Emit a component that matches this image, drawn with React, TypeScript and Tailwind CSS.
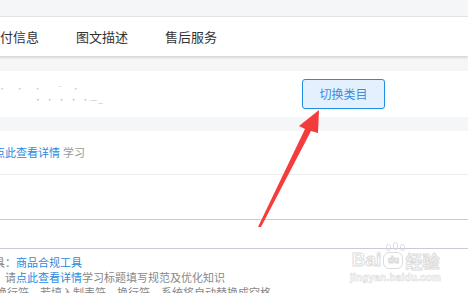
const cjk = "font-['Noto_Sans_CJK_SC','Noto_Sans',sans-serif]"

const tabs = ["支付信息", "图文描述", "售后服务"]

function Arrow() {
  return (
    <svg className="absolute left-0 top-0 pointer-events-none" width={468} height={293} viewBox="0 0 468 293">
      <polygon
        points="258,227 305,129 299,126 319,110 318,133 311,131 261,227"
        fill="#f53c3c"
      />
    </svg>
  )
}

function Watermark() {
  return (
    <div className="absolute left-[350px] top-[250px] flex flex-col items-center select-none">
      <div className="flex items-end gap-[2px] text-transparent [-webkit-text-stroke:1px_#dcdcdc]">
        <span className="font-['Liberation_Sans',sans-serif] text-[19px] font-bold leading-none">Bai</span>
        <span className="relative w-[20px] h-[17px] rounded-[6px] border border-[#dcdcdc] flex items-center justify-center text-[9px] font-bold font-['Liberation_Sans',sans-serif] leading-none">
          du
          <span className="absolute -top-[9px] left-[2px] flex gap-[2px]">
            <span className="w-[5px] h-[7px] rounded-full border border-[#dcdcdc]" />
            <span className="w-[5px] h-[8px] rounded-full border border-[#dcdcdc] -mt-[2px]" />
            <span className="w-[5px] h-[7px] rounded-full border border-[#dcdcdc]" />
          </span>
        </span>
        <span className={`${cjk} text-[17px] font-bold leading-none`}>经验</span>
      </div>
      <div className="mt-[4px] text-[10px] leading-none font-['Liberation_Sans',sans-serif] font-bold text-transparent [-webkit-text-stroke:0.6px_#dcdcdc] tracking-[0.2px]">
        jingyan.baidu.com
      </div>
    </div>
  )
}

export default function App() {
  return (
    <div className={`relative w-[468px] h-[293px] overflow-hidden bg-[#f5f6f8] ${cjk}`}>
      <div className="h-[16px]" />
      {/* tab bar */}
      <div className="h-[40px] bg-white border-t border-[#e3e4e8] shadow-[0_2px_2px_rgba(0,0,0,0.12)] flex items-center gap-[37px] -ml-[13px] text-[13px] text-[#333]">
        {tabs.map((t) => (
          <span key={t} className="leading-none">{t}</span>
        ))}
      </div>
      <div className="h-[15px]" />
      {/* category card */}
      <div className="h-[46px] bg-white flex items-center">
        <div className="w-[304px] flex flex-col gap-[3px] -ml-[2px] text-[#c8c8c8] leading-none">
          <span className="text-[8px] tracking-[4px]">· · ·&nbsp; ¯ ·</span>
          <span className="text-[8px] pl-[36px] text-[#bbb] tracking-[1px]">· · ·&nbsp;· ·—_</span>
        </div>
        <button className="w-[83px] h-[30px] rounded-[3px] border border-[#1e8fe1] bg-[#e4f0fd] text-[12px] text-[#3b8de0] leading-none">
          切换类目
        </button>
      </div>
      <div className="h-[14px]" />
      {/* form section */}
      <div className="bg-white h-full">
        <div className="h-[44px] border-b border-[#ececec] flex items-center -ml-[6px] text-[11px] leading-none">
          <span className="text-[#2b8ae0]">点此查看详情</span>
          <span className="ml-[3px] text-[#999]">学习</span>
        </div>
        <div className="h-[45px] border-b border-[#cbc8d8]" />
        <div className="h-[29px] border-b border-[#cbc8d8]" />
        <div className="pt-[8px] flex flex-col gap-[4px] text-[11px] leading-[11px] text-[#888]">
          <div className="-ml-[6px]">
            具：<span className="text-[#2b8ae0]">商品合规工具</span>
          </div>
          <div className="pl-[5px]">
            请<span className="text-[#2b8ae0]">点此查看详情</span>学习标题填写规范及优化知识
          </div>
          <div className="-ml-[4px] text-[#888]">换行符，若填入制表符、换行符，系统将自动替换成空格</div>
        </div>
      </div>
      <Arrow />
      <Watermark />
    </div>
  )
}
